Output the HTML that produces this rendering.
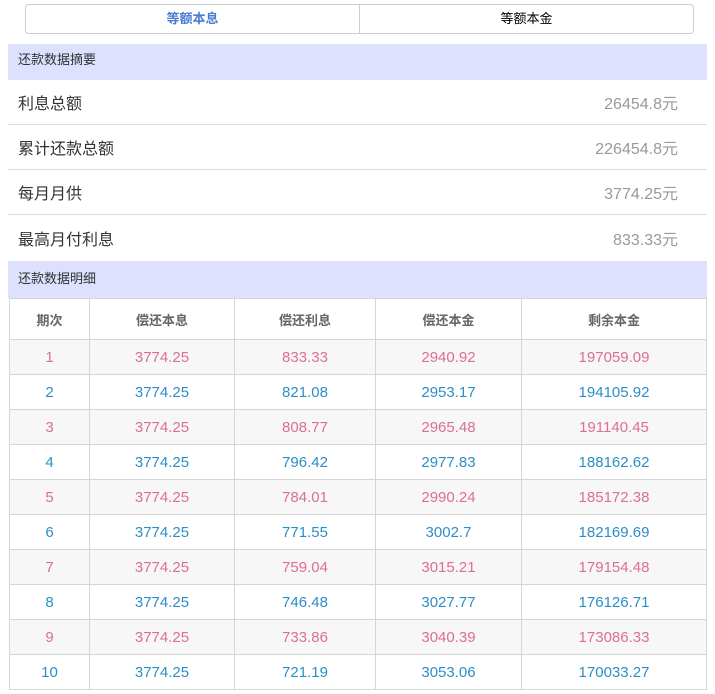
<!DOCTYPE html>
<html><head><meta charset="utf-8"><style>
*{margin:0;padding:0;box-sizing:border-box}
body{width:715px;height:694px;background:#fff;font-family:"Liberation Sans","Noto Sans CJK SC",sans-serif;position:relative;overflow:hidden}
.tabs{position:absolute;left:25px;top:4px;width:669px;height:30px;border:1px solid #ccc;border-radius:4px;display:flex;font-size:13px}
.tabs div{flex:1;text-align:center;line-height:28px}
.tabs div:first-child{color:#4a7bd0;border-right:1px solid #ccc;font-weight:bold}
.hd{position:absolute;left:8px;width:699px;background:#dde1fd;font-size:13px;color:#333;padding-left:10px}
.row{position:absolute;left:8px;width:699px;height:45px;border-bottom:1px solid #ddd;display:flex;justify-content:space-between;align-items:center;padding:0 29px 0 10px;font-size:16px;color:#333}
.row span:last-child{color:#999;font-size:16px}
table{position:absolute;left:9px;top:298px;width:698px;border-collapse:collapse;font-size:15px;text-align:center}
td,th{border:1px solid #d6d6d6}
th{height:41px;color:#666;font-weight:bold;font-size:13px}
td{height:35px}
tr.o td{background:#f7f7f7;color:#dc6f93}
tr.e td{color:#2c8ec6}
</style></head><body>
<div class="tabs"><div>等额本息</div><div>等额本金</div></div>
<div class="hd" style="top:44px;height:36px;line-height:32px">还款数据摘要</div>
<div class="row" style="top:80px"><span>利息总额</span><span>26454.8元</span></div>
<div class="row" style="top:125px"><span>累计还款总额</span><span>226454.8元</span></div>
<div class="row" style="top:170px"><span>每月月供</span><span>3774.25元</span></div>
<div class="row" style="top:215px;border-bottom:none"><span>最高月付利息</span><span>833.33元</span></div>
<div class="hd" style="top:261px;height:37px;line-height:36px">还款数据明细</div>
<table>
<colgroup><col style="width:80px"><col style="width:145px"><col style="width:141px"><col style="width:146px"><col></colgroup>
<tr><th>期次</th><th>偿还本息</th><th>偿还利息</th><th>偿还本金</th><th>剩余本金</th></tr>
<tr class="o"><td>1</td><td>3774.25</td><td>833.33</td><td>2940.92</td><td>197059.09</td></tr>
<tr class="e"><td>2</td><td>3774.25</td><td>821.08</td><td>2953.17</td><td>194105.92</td></tr>
<tr class="o"><td>3</td><td>3774.25</td><td>808.77</td><td>2965.48</td><td>191140.45</td></tr>
<tr class="e"><td>4</td><td>3774.25</td><td>796.42</td><td>2977.83</td><td>188162.62</td></tr>
<tr class="o"><td>5</td><td>3774.25</td><td>784.01</td><td>2990.24</td><td>185172.38</td></tr>
<tr class="e"><td>6</td><td>3774.25</td><td>771.55</td><td>3002.7</td><td>182169.69</td></tr>
<tr class="o"><td>7</td><td>3774.25</td><td>759.04</td><td>3015.21</td><td>179154.48</td></tr>
<tr class="e"><td>8</td><td>3774.25</td><td>746.48</td><td>3027.77</td><td>176126.71</td></tr>
<tr class="o"><td>9</td><td>3774.25</td><td>733.86</td><td>3040.39</td><td>173086.33</td></tr>
<tr class="e"><td>10</td><td>3774.25</td><td>721.19</td><td>3053.06</td><td>170033.27</td></tr>
</table>
</body></html>
